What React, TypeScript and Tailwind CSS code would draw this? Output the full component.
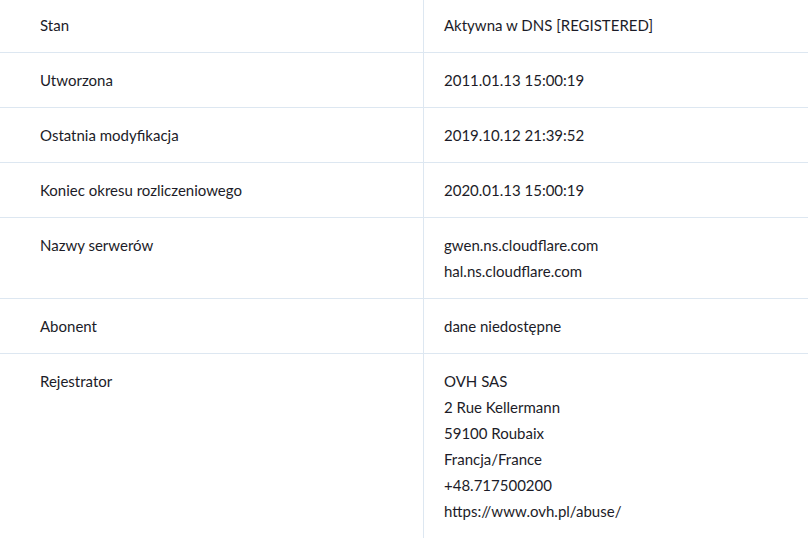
import React from 'react';

const rows: { label: string; value: string[] }[] = [
  { label: 'Stan', value: ['Aktywna w DNS [REGISTERED]'] },
  { label: 'Utworzona', value: ['2011.01.13 15:00:19'] },
  { label: 'Ostatnia modyfikacja', value: ['2019.10.12 21:39:52'] },
  { label: 'Koniec okresu rozliczeniowego', value: ['2020.01.13 15:00:19'] },
  { label: 'Nazwy serwerów', value: ['gwen.ns.cloudflare.com', 'hal.ns.cloudflare.com'] },
  { label: 'Abonent', value: ['dane niedostępne'] },
  {
    label: 'Rejestrator',
    value: [
      'OVH SAS',
      '2 Rue Kellermann',
      '59100 Roubaix',
      'Francja/France',
      '+48.717500200',
      'https://www.ovh.pl/abuse/',
    ],
  },
];

export default function App() {
  return (
    <div className="min-h-screen bg-white text-[15px] leading-[26px] text-[#1c1c28]" style={{ fontFamily: 'Lato, "Open Sans", sans-serif' }}>
      {rows.map((row, i) => (
        <div
          key={row.label}
          className={`grid grid-cols-[424px_1fr] ${i < rows.length - 1 ? 'border-b border-[#dde7f1]' : ''}`}
        >
          <div className={`${i === 0 ? 'pt-[12px]' : 'pt-[14px]'} pb-[14px] pl-10 border-r border-[#dde7f1]`}>{row.label}</div>
          <div className={`${i === 0 ? 'pt-[12px]' : 'pt-[14px]'} pb-[14px] pl-5`}>
            {row.value.map((line) => (
              <div key={line}>{line}</div>
            ))}
          </div>
        </div>
      ))}
    </div>
  );
}
